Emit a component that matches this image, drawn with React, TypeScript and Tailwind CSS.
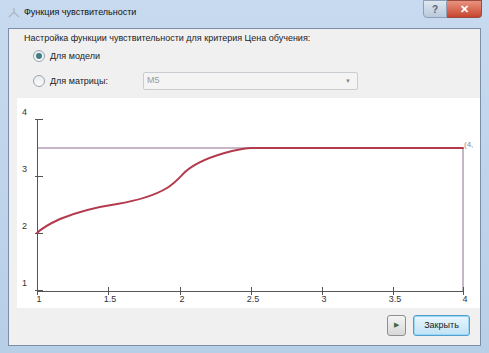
import React from "react";

const font = { fontFamily: '"Liberation Sans", "Noto Sans", Arial, sans-serif' };

const curve =
  "M20,135 C23,132 30,127 43,121 C60,114 80,109 100,106 C118,103 135,99 150,90 C158,85 162,80 168,74 C178,65 195,58 215,53 C224,51 230,50 234,50 L446,50";

const xTicks = [
  { x: 20, label: "1" },
  { x: 91, label: "1.5" },
  { x: 163, label: "2" },
  { x: 234, label: "2.5" },
  { x: 305, label: "3" },
  { x: 376, label: "3.5" },
  { x: 446, label: "4" },
];

const yTicks = [
  { y: 21, label: "4" },
  { y: 78, label: "3" },
  { y: 135, label: "2" },
  { y: 192, label: "1" },
];

function Chart() {
  return (
    <svg width="463" height="210" viewBox="0 0 463 210" className="block">
      {/* threshold lines */}
      <line x1="20" y1="50" x2="446" y2="50" stroke="#8e6f92" strokeWidth="1" />
      <line x1="446" y1="50" x2="446" y2="193" stroke="#8e6f92" strokeWidth="1" />

      {/* axes */}
      <line x1="20.5" y1="21" x2="20.5" y2="194" stroke="#555" strokeWidth="1" />
      <line x1="20" y1="193.5" x2="447" y2="193.5" stroke="#555" strokeWidth="1" />
      {yTicks.map((t) => (
        <g key={t.label}>
          <line x1="18" y1={t.y + 0.5} x2="26" y2={t.y + 0.5} stroke="#555" strokeWidth="1" />
          <text x="5" y={t.y - 4} fontSize="9" fill="#333" style={font}>
            {t.label}
          </text>
        </g>
      ))}
      {xTicks.map((t) => (
        <g key={t.label}>
          <line x1={t.x + 0.5} y1="189" x2={t.x + 0.5} y2="197" stroke="#555" strokeWidth="1" />
          <text x={t.x + 2} y="204" fontSize="9" fill="#333" textAnchor="middle" style={font}>
            {t.label}
          </text>
        </g>
      ))}

      {/* sensitivity curve */}
      <path d={curve} fill="none" stroke="#b23a4c" strokeWidth="2" strokeLinecap="round" />
      <text x="447" y="49" fontSize="8" fill="#8a8a9a" style={font}>
        (4,
      </text>
    </svg>
  );
}

function Radio({ checked, label }: { checked?: boolean; label: string }) {
  return (
    <div className="flex w-[110px] items-center gap-[5px]">
      <span className="flex h-[12px] w-[12px] items-center justify-center rounded-full border border-[#9aa3ad] bg-gradient-to-b from-[#e8ebee] to-[#fbfbfb]">
        {checked && <span className="h-[6px] w-[6px] rounded-full bg-[#3f7d87]" />}
      </span>
      <span className="text-[9px] leading-[14px] text-[#222]">{label}</span>
    </div>
  );
}

export default function App() {
  return (
    <div
      className="flex h-[353px] w-[489px] flex-col overflow-hidden bg-gradient-to-b from-[#c7daef] to-[#b8cfe8]"
      style={font}
    >
      {/* title bar */}
      <div className="flex h-[28px] items-start justify-between pl-[8px] pr-[7px]">
        <div className="flex h-[26px] items-center gap-[4px]">
          <svg width="12" height="12" viewBox="0 0 12 12">
            <path d="M1,10 L6,5 L11,10 M6,5 L6,1" fill="none" stroke="#a8b4c0" strokeWidth="1.2" />
          </svg>
          <span className="text-[9px] text-[#111]">Функция чувствительности</span>
        </div>
        <div className="flex">
          <div className="flex h-[18px] w-[24px] items-center justify-center rounded-bl-[4px] border border-[#8c9fb6] bg-gradient-to-b from-[#dfe7f0] to-[#b9c9da] text-[10px] font-bold text-[#56657a]">
            ?
          </div>
          <div className="flex h-[18px] w-[35px] items-center justify-center rounded-br-[4px] border border-l-0 border-[#9b4a40] bg-gradient-to-b from-[#e8937f] to-[#c7432c] text-[11px] font-bold text-white">
            ✕
          </div>
        </div>
      </div>

      {/* client area */}
      <div className="mx-[8px] flex h-[318px] flex-col border border-[#7d8fa6] bg-[#f0f0f0]">
        <div className="pl-[15px] pt-[2px] text-[9px] leading-[14px] text-[#222]">
          Настройка функции чувствительности для критерия Цена обучения:
        </div>
        <div className="mt-[2px] flex h-[18px] items-center pl-[24px]">
          <Radio checked label="Для модели" />
        </div>
        <div className="mt-[7px] flex h-[18px] items-center pl-[24px]">
          <Radio label="Для матрицы:" />
          <div className="flex h-[18px] w-[215px] items-center justify-between rounded-[2px] border border-[#c9ccd1] bg-[#f4f4f4] pl-[3px] pr-[6px]">
            <span className="text-[9px] text-[#9a9a9a]">M5</span>
            <span className="text-[6px] text-[#888]">▼</span>
          </div>
        </div>
        <div className="ml-[8px] mt-[8px] h-[210px] bg-white">
          <Chart />
        </div>
        <div className="mt-[7px] flex justify-end gap-[7px] pr-[10px]">
          <div className="flex h-[21px] w-[19px] items-center justify-center rounded-[3px] border border-[#8e8f8f] bg-gradient-to-b from-[#f4f4f4] to-[#d8d8d8] text-[7px] text-[#3d6a3d]">
            ▶
          </div>
          <div className="flex h-[21px] w-[57px] items-center justify-center rounded-[3px] border border-[#4f9fd0] bg-gradient-to-b from-[#eaf6fd] to-[#bfe2f6] text-[9px] text-[#222] shadow-[inset_0_0_0_1px_#9fd6f4]">
            Закрыть
          </div>
        </div>
      </div>
    </div>
  );
}
